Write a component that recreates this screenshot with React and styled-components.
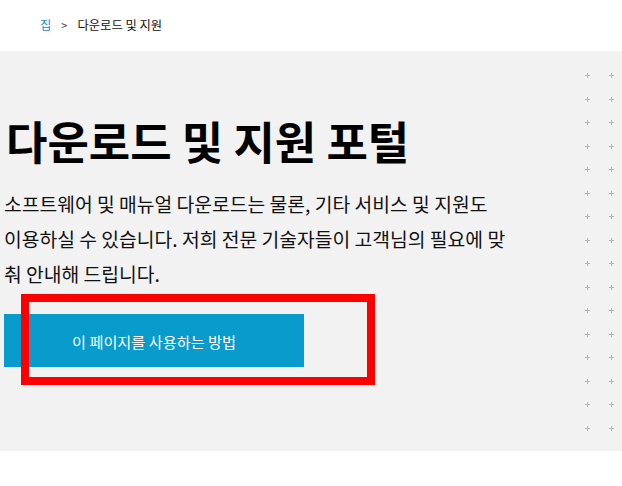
import styled, { createGlobalStyle } from 'styled-components';

const GlobalStyle = createGlobalStyle`
  html, body {
    margin: 0;
    padding: 0;
    background: #ffffff;
  }
  body {
    font-family: "Noto Sans CJK KR", "Noto Sans", sans-serif;
    color: #000;
  }
`;

const Page = styled.div`
  width: 622px;
  height: 486px;
  overflow: hidden;
  background: #fff;
`;

const Breadcrumb = styled.nav`
  height: 51px;
  display: flex;
  align-items: center;
  gap: 10px;
  padding-left: 40px;
  padding-bottom: 2px;
  box-sizing: border-box;
  font-size: 12.3px;
`;

const Crumb = styled.a`
  color: ${(p) => (p.$home ? '#1a8fd0' : '#111')};
  text-decoration: none;
`;

const Sep = styled.span`
  color: #333;
  font-size: 11px;
`;

const Hero = styled.section`
  position: relative;
  height: 400px;
  background: #f2f2f2;
  display: flex;
`;

const Content = styled.div`
  width: 540px;
  padding: 60px 0 0 4px;
`;

const Title = styled.h1`
  margin: 0;
  font-size: 45px;
  font-weight: 700;
  line-height: 60px;
  padding-left: 2px;
  letter-spacing: 0;
`;

const Lead = styled.p`
  margin: 16px 0 0;
  font-size: 19.3px;
  line-height: 35px;
  color: #111;
`;

const Action = styled.a`
  display: flex;
  align-items: center;
  justify-content: center;
  width: 300px;
  height: 53px;
  margin-top: 22px;
  background: #0a9bcd;
  color: #fff;
  font-size: 15.2px;
  text-decoration: none;
`;

const Highlight = styled.div`
  position: absolute;
  left: 21px;
  top: 243px;
  width: 354px;
  height: 91px;
  border: 8px solid #ff0000;
  box-sizing: border-box;
  pointer-events: none;
`;

const Dots = styled.div`
  position: absolute;
  left: 584px;
  top: 21px;
  display: grid;
  grid-template-columns: repeat(2, 7px);
  grid-auto-rows: 7px;
  column-gap: 16.5px;
  row-gap: 16.53px;
`;

const Plus = styled.span`
  position: relative;
  width: 7px;
  height: 7px;
  &::before,
  &::after {
    content: '';
    position: absolute;
    background: #b5b5b5;
  }
  &::before {
    left: 1px;
    top: 3px;
    width: 5px;
    height: 1px;
  }
  &::after {
    left: 3px;
    top: 1px;
    width: 1px;
    height: 5px;
  }
`;

export default function App() {
  const plusses = Array.from({ length: 32 });
  return (
    <>
      <GlobalStyle />
      <Page>
        <Breadcrumb>
          <Crumb $home href="#">집</Crumb>
          <Sep>&gt;</Sep>
          <Crumb href="#">다운로드 및 지원</Crumb>
        </Breadcrumb>
        <Hero>
          <Content>
            <Title>다운로드 및 지원 포털</Title>
            <Lead>
              소프트웨어 및 매뉴얼 다운로드는 물론, 기타 서비스 및 지원도
              <br />
              이용하실 수 있습니다. 저희 전문 기술자들이 고객님의 필요에 맞
              <br />
              춰 안내해 드립니다.
            </Lead>
            <Action href="#">이 페이지를 사용하는 방법</Action>
          </Content>
          <Dots>
            {plusses.map((_, i) => (
              <Plus key={i} />
            ))}
          </Dots>
          <Highlight />
        </Hero>
      </Page>
    </>
  );
}
